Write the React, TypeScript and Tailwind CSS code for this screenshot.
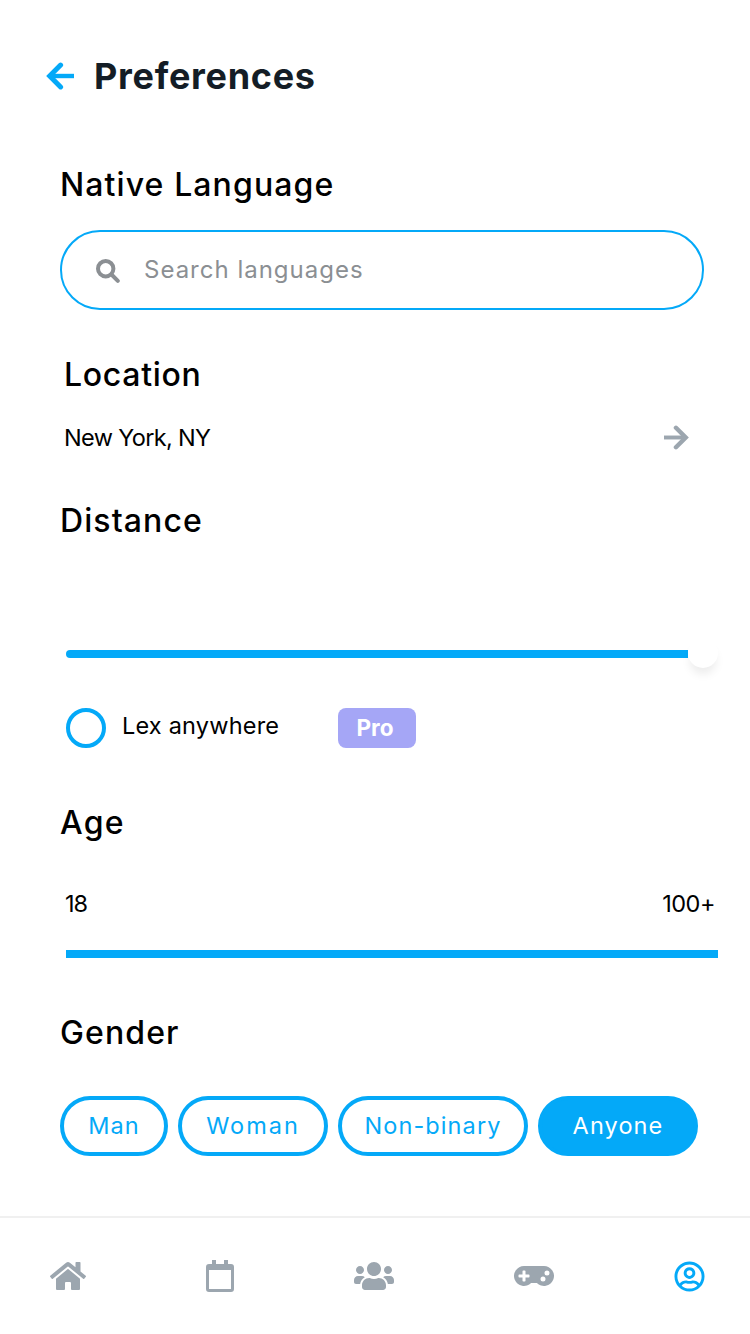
import { useState } from "react";
import clsx from "clsx";
import { FaGamepad, FaHome, FaRegUserCircle, FaUsers } from "react-icons/fa";

function ArrowIcon({ className }: { className?: string }) {
  return (
    <svg viewBox="0 0 28 28" fill="none" stroke="currentColor" className={className}>
      <path d="M28 14H4" strokeWidth="4.4" />
      <path d="M14.6 3.1L3.7 14l10.9 10.9" strokeWidth="5" strokeLinecap="round" />
    </svg>
  );
}

function SearchIcon({ className }: { className?: string }) {
  return (
    <svg viewBox="0 0 24 24" fill="none" stroke="currentColor" strokeWidth="4" className={className}>
      <circle cx="9.7" cy="9.7" r="7.7" />
      <path d="M15.5 15.5l6.3 6.3" strokeLinecap="round" />
    </svg>
  );
}

function CalendarIcon({ className }: { className?: string }) {
  return (
    <svg viewBox="0 0 28 32" fill="currentColor" className={className}>
      <path
        fillRule="evenodd"
        d="M6 0h4v4h8V0h4v4h3a3 3 0 0 1 3 3v22a3 3 0 0 1-3 3H3a3 3 0 0 1-3-3V7a3 3 0 0 1 3-3h3zM3 10v19h22V10z"
      />
    </svg>
  );
}

const genders = [
  { label: "Man", className: "w-[108px] tracking-[1px]" },
  { label: "Woman", className: "w-[150px] tracking-[2px]" },
  { label: "Non-binary", className: "w-[190px] tracking-[1.1px]" },
  { label: "Anyone", className: "w-[160px] tracking-[1.1px]" },
];

export default function App() {
  const [gender, setGender] = useState("Anyone");
  const [anywhere, setAnywhere] = useState(false);

  return (
    <div className="flex h-[1334px] w-[750px] flex-col overflow-hidden bg-white font-['Inter',sans-serif] text-[23.5px] text-black">
      <header className="mt-[46px] flex h-[60px] shrink-0 items-center pl-[46px]">
        <button aria-label="Back" className="text-[#04a9f8]">
          <ArrowIcon className="size-7" />
        </button>
        <h1 className="ml-5 text-[36px] font-bold tracking-[0.7px] text-[#141d26]">Preferences</h1>
      </header>

      <main className="flex flex-1 flex-col pl-[60px]">
        {/* Native language */}
        <section className="mt-[55px]">
          <h2 className="h-12 text-[32px] leading-12 font-medium tracking-[1.1px]">Native Language</h2>
          <label className="mt-[21px] flex h-20 w-[644px] items-center rounded-full border-2 border-[#04a9f8] pl-[34px]">
            <SearchIcon className="mt-0.5 size-6 text-[#8b8f93]" />
            <input
              type="text"
              placeholder="Search languages"
              className="ml-6 w-[480px] bg-transparent text-2xl tracking-[1px] outline-none placeholder:text-[#8b8f93]"
            />
          </label>
        </section>

        {/* Location */}
        <section className="mt-[41px] pl-1">
          <h2 className="h-12 text-[32px] leading-12 font-medium tracking-[0.7px]">Location</h2>
          <div className="mt-[19px] flex h-10 w-[625px] items-center justify-between">
            <span className="tracking-[-0.65px]">New York, NY</span>
            <ArrowIcon className="mb-0.5 size-[25px] rotate-180 text-[#9ca6af]" />
          </div>
        </section>

        {/* Distance */}
        <section className="mt-[39px]">
          <h2 className="h-12 text-[32px] leading-12 font-medium tracking-[1.1px]">Distance</h2>
          <div className="mt-[93px] ml-1.5 flex h-[30px] w-[652px] items-center">
            <div className="mt-0.5 h-2 flex-1 rounded-l-full bg-[#04a9f8]" />
            <div className="size-[30px] rounded-full bg-white shadow-[0_8px_10px_-2px_rgba(0,0,0,0.08)]" />
          </div>
          <div className="mt-10 ml-1.5 flex h-10 items-center">
            <button
              aria-label="Lex anywhere"
              onClick={() => setAnywhere(!anywhere)}
              className={clsx(
                "size-10 rounded-full border-4 border-[#04a9f8]",
                anywhere && "bg-[#04a9f8]",
              )}
            />
            <span className="mb-1 ml-4 w-[216px] tracking-[0.2px]">Lex anywhere</span>
            <span className="flex h-10 w-[78px] items-center justify-center rounded-lg bg-[#a5a6f6] pr-1 text-[22.5px] font-bold text-white">
              Pro
            </span>
          </div>
        </section>

        {/* Age */}
        <section className="mt-[51px]">
          <h2 className="h-12 text-[32px] leading-12 font-medium tracking-[1.2px]">Age</h2>
          <div className="mt-[37px] ml-[5px] flex h-10 w-[650px] items-center justify-between">
            <span className="tracking-[-1px]">18</span>
            <span className="tracking-[-0.5px]">100+</span>
          </div>
          <div className="mt-[26px] ml-1.5 h-2 w-[652px] bg-[#04a9f8]" />
        </section>

        {/* Gender */}
        <section className="mt-[51px]">
          <h2 className="h-12 text-[32px] leading-12 font-medium tracking-[1.1px]">Gender</h2>
          <div className="mt-[39px] flex gap-2.5">
            {genders.map((item) => (
              <button
                key={item.label}
                onClick={() => setGender(item.label)}
                className={clsx(
                  "h-[60px] rounded-full border-4 border-[#04a9f8] whitespace-nowrap",
                  item.className,
                  gender === item.label ? "bg-[#04a9f8] text-white" : "text-[#04a9f8]",
                )}
              >
                {item.label}
              </button>
            ))}
          </div>
        </section>
      </main>

      <nav className="flex h-[118px] shrink-0 items-center justify-between border-t-2 border-[#f0f0f0] pr-[45px] pl-[50px] text-[#9ca6af]">
        <FaHome className="size-9" />
        <CalendarIcon className="h-8 w-7" />
        <FaUsers className="size-10" />
        <FaGamepad className="size-10" />
        <FaRegUserCircle className="size-[31px] text-[#04a9f8]" />
      </nav>
    </div>
  );
}
